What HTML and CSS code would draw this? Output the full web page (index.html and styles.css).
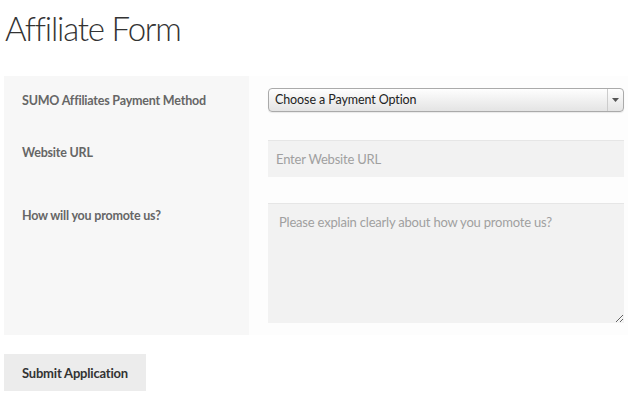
FILE: index.html
```html
<!DOCTYPE html>
<html lang="en">
<head>
  <meta charset="UTF-8">
  <meta name="viewport" content="width=device-width, initial-scale=1.0">
  <title>Affiliate Form</title>
  <link rel="stylesheet" href="styles.css">
</head>
<body>
  <h1 class="title">Affiliate Form</h1>

  <form class="affiliate-form">
    <div class="form-table">
      <div class="cell label-cell first"><label>SUMO Affiliates Payment Method</label></div>
      <div class="cell field-cell first">
        <div class="fake-select">
          <span class="fake-select-text">Choose a Payment Option</span>
          <span class="fake-select-arrow"><svg width="7" height="4" viewBox="0 0 7 4"><path d="M0 0h7L3.5 4z" fill="#555"/></svg></span>
        </div>
      </div>

      <div class="cell label-cell"><label for="url">Website URL</label></div>
      <div class="cell field-cell">
        <input type="text" id="url" class="text-input" placeholder="Enter Website URL">
      </div>

      <div class="cell label-cell last"><label for="promote">How will you promote us?</label></div>
      <div class="cell field-cell last">
        <textarea id="promote" class="text-area" placeholder="Please explain clearly about how you promote us?"></textarea>
      </div>
    </div>

    <button type="button" class="submit-btn">Submit Application</button>
  </form>
</body>
</html>
```

FILE: styles.css
```css
body { margin: 0; padding: 0 2px 0 4px; font-family: "Source Sans Pro", "Lato", "Liberation Sans", sans-serif; color: #333; background: #fff; }
.title { margin: 0; padding: 8px 0 0 1px; font-size: 33px; font-weight: 300; color: #333; line-height: 40px; letter-spacing: -1.2px; }
.affiliate-form { margin-top: 28px; }
.form-table { display: grid; grid-template-columns: 245px 1fr; }
.cell { padding: 12px 4px 14px 19px; }
.cell.first { padding-bottom: 16px; }
.cell.last { padding-bottom: 12px; }
.label-cell { background: #f7f7f7; padding-left: 18px; padding-top: 17px; }
.field-cell { background: #fdfdfd; }
label { font-size: 12.5px; font-weight: bold; color: #666; display: block; line-height: 16px; letter-spacing: -0.2px; }
.fake-select { display: flex; height: 22px; border: 1px solid #aaa; border-radius: 4px; background: linear-gradient(#fefefe, #e4e4e4); box-shadow: 0 1px 1px rgba(0,0,0,0.08); }
.fake-select-text { flex: 1; padding-left: 6px; font-size: 12.5px; line-height: 22px; color: #222; letter-spacing: -0.1px; }
.fake-select-arrow { width: 15px; border-left: 1px solid #ccc; display: flex; align-items: center; justify-content: center; }
.text-input, .text-area { display: block; width: 100%; box-sizing: border-box; border: 0; border-top: 1px solid #e6e6e6; background: #f2f2f2; font-family: inherit; font-size: 13px; color: #333; outline: none; letter-spacing: -0.2px; }
.text-input { height: 37px; padding: 0 8px; }
.text-area { height: 120px; padding: 10px 11px; resize: vertical; }
.text-input::placeholder, .text-area::placeholder { color: #a0a0a0; }
.submit-btn { display: block; margin-top: 19px; padding: 0 18px; height: 37px; border: 0; background: #ececec; font-family: inherit; font-size: 13px; font-weight: bold; color: #333; cursor: pointer; letter-spacing: -0.2px; }
```
